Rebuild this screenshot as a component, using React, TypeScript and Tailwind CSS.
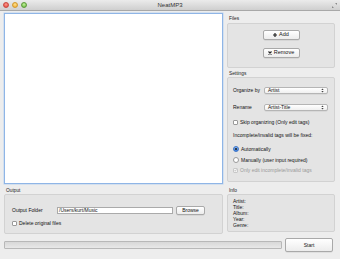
import React from "react";

const font = { fontFamily: '"Liberation Sans", Arial, sans-serif' };

function GroupLabel({ children }: { children: React.ReactNode }) {
  return <div className="h-[5px] pl-[2px] text-[4.8px] leading-[5px] text-[#222]">{children}</div>;
}

function Select({ value }: { value: string }) {
  return (
    <div className="flex h-[7px] w-[64px] items-center justify-between rounded-[2px] border border-[#b5b5b5] bg-gradient-to-b from-white to-[#f0f0f0] px-[3px] shadow-[0_0.5px_0_rgba(0,0,0,0.1)]">
      <span className="text-[5px] leading-none">{value}</span>
      <svg width="3" height="5" viewBox="0 0 3 5">
        <path d="M0.3 2 L1.5 0.6 L2.7 2 Z M0.3 3 L1.5 4.4 L2.7 3 Z" fill="#444" />
      </svg>
    </div>
  );
}

function Checkbox({ checked, disabled }: { checked?: boolean; disabled?: boolean }) {
  return (
    <div className={`flex h-[5px] w-[5px] items-center justify-center rounded-[1px] border ${disabled ? "border-[#c8c8c8] bg-[#f4f4f4]" : "border-[#9a9a9a] bg-white"}`}>
      {checked && (
        <svg width="5" height="5" viewBox="0 0 5 5">
          <path d="M1 2.5 L2 3.6 L4.2 0.8" stroke={disabled ? "#9a9a9a" : "#222"} strokeWidth="0.9" fill="none" />
        </svg>
      )}
    </div>
  );
}

function Radio({ checked }: { checked?: boolean }) {
  return (
    <div className={`flex h-[6px] w-[6px] items-center justify-center rounded-full border ${checked ? "border-[#3b73c8] bg-gradient-to-b from-[#8ab6ef] to-[#3a7ddb]" : "border-[#9a9a9a] bg-white"}`}>
      {checked && <div className="h-[2px] w-[2px] rounded-full bg-[#1a1a1a]" />}
    </div>
  );
}

function Button({ children, className = "" }: { children: React.ReactNode; className?: string }) {
  return (
    <div className={`flex items-center justify-center rounded-[2px] border border-[#a9a9a9] bg-gradient-to-b from-white to-[#ececec] text-[5px] leading-none text-[#111] shadow-[0_0.5px_0_rgba(0,0,0,0.12)] ${className}`}>
      {children}
    </div>
  );
}

const txt = "text-[5px] leading-none text-[#111]";

export default function App() {
  return (
    <div style={font} className="flex h-[259px] w-[340px] flex-col overflow-hidden bg-[#ededed] text-[#111]">
      {/* Title bar */}
      <div className="relative flex h-[11px] items-center border-b border-[#a8a8a8] bg-gradient-to-b from-[#ebebeb] to-[#cfcfcf]">
        <div className="flex items-center gap-[3px] pl-[3px]">
          <div className="h-[6px] w-[6px] rounded-full border border-[#c9483f] bg-[radial-gradient(circle_at_50%_35%,#ff9a8e,#e0443a)]" />
          <div className="h-[6px] w-[6px] rounded-full border border-[#d2992e] bg-[radial-gradient(circle_at_50%_35%,#ffe08a,#f0a92e)]" />
          <div className="h-[6px] w-[6px] rounded-full border border-[#5d9a3a] bg-[radial-gradient(circle_at_50%_35%,#c4f29a,#62b43d)]" />
        </div>
        <div className="absolute inset-x-0 top-0 flex h-[11px] items-center justify-center text-[6px] text-[#333]">NeatMP3</div>
        <svg className="absolute right-[3px] top-[3px]" width="5" height="5" viewBox="0 0 5 5">
          <path d="M3 0 H5 V2 Z M0 3 V5 H2 Z" fill="#8a8a8a" />
        </svg>
      </div>

      {/* Main */}
      <div className="flex flex-1 gap-[4px] px-[4px] pt-[2px]">
        {/* Left column */}
        <div className="flex w-[219px] flex-col">
          <div className="h-[171px] border-[1.5px] border-[#8fb5e6] bg-white shadow-[0_0_0_0.5px_#bcd3f0]" />
          <div className="mt-[4px]">
            <GroupLabel>Output</GroupLabel>
            <div className="mt-[1px] h-[40px] rounded-[2px] border border-[#d2d2d2] bg-[#e4e4e4] px-[7px] pt-[11px]">
              <div className="flex items-center">
                <span className={`w-[45px] ${txt}`}>Output Folder</span>
                <div className={`flex h-[7px] w-[116px] items-center border border-[#aaa] bg-white px-[1px] ${txt}`}>/Users/kurt/Music</div>
                <Button className="ml-[3px] h-[9px] w-[29px] text-[5.5px]">Browse</Button>
              </div>
              <div className="mt-[6px] flex items-center gap-[2px]">
                <Checkbox />
                <span className={txt}>Delete original files</span>
              </div>
            </div>
          </div>
        </div>

        {/* Right column */}
        <div className="flex w-[108px] flex-col">
          <div className="mt-[3px]">
            <GroupLabel>Files</GroupLabel>
            <div className="mt-[2px] flex h-[45px] flex-col items-center gap-[8px] rounded-[2px] border border-[#d2d2d2] bg-[#e4e4e4] pt-[6px]">
              <Button className="h-[10px] w-[37px] gap-[2px]">
                <svg width="4" height="4" viewBox="0 0 4 4"><path d="M1.4 0 H2.6 V1.4 H4 V2.6 H2.6 V4 H1.4 V2.6 H0 V1.4 H1.4 Z" fill="#222" /></svg>
                <span className="text-[5.5px]">Add</span>
              </Button>
              <Button className="h-[10px] w-[37px] gap-[2px]">
                <svg width="4" height="4" viewBox="0 0 4 4"><path d="M0.5 0.5 L3.5 3.5 M3.5 0.5 L0.5 3.5" stroke="#222" strokeWidth="1.1" /></svg>
                <span className="text-[5.5px]">Remove</span>
              </Button>
            </div>
          </div>

          <div className="mt-[3px]">
            <GroupLabel>Settings</GroupLabel>
            <div className="mt-[1px] h-[105px] rounded-[2px] border border-[#d2d2d2] bg-[#e4e4e4] pl-[5px] pt-[9px]">
              <div className="flex items-center">
                <span className={`w-[31px] ${txt}`}>Organize by</span>
                <Select value="Artist" />
              </div>
              <div className="mt-[10px] flex items-center">
                <span className={`w-[31px] ${txt}`}>Rename</span>
                <Select value="Artist-Title" />
              </div>
              <div className="mt-[9px] flex items-center gap-[2px]">
                <Checkbox />
                <span className={txt}>Skip organizing (Only edit tags)</span>
              </div>
              <div className={`mt-[8px] ${txt}`}>Incomplete/invalid tags will be fixed:</div>
              <div className="mt-[8px] flex items-center gap-[2px]">
                <Radio checked />
                <span className={txt}>Automatically</span>
              </div>
              <div className="mt-[5px] flex items-center gap-[2px]">
                <Radio />
                <span className={txt}>Manually (user input required)</span>
              </div>
              <div className="mt-[5px] flex items-center gap-[2px]">
                <Checkbox checked disabled />
                <span className="text-[5px] leading-none text-[#9a9a9a]">Only edit incomplete/invalid tags</span>
              </div>
            </div>
          </div>

          <div className="mt-[6px]">
            <GroupLabel>Info</GroupLabel>
            <div className="mt-[1px] flex h-[38px] flex-col gap-[1px] rounded-[2px] border border-[#d2d2d2] bg-[#e4e4e4] pl-[5px] pt-[4px] text-[5px] leading-[5px]">
              <span>Artist:</span>
              <span>Title:</span>
              <span>Album:</span>
              <span>Year:</span>
              <span>Genre:</span>
            </div>
          </div>
        </div>
      </div>

      {/* Bottom bar */}
      <div className="flex items-center gap-[3px] px-[4px] pb-[7px]">
        <div className="h-[8px] w-[278px] rounded-[1px] border border-[#b8b8b8] bg-gradient-to-b from-[#d8d8d8] to-[#e8e8e8]" />
        <Button className="h-[14px] w-[48px] text-[5.5px]">Start</Button>
      </div>
    </div>
  );
}
